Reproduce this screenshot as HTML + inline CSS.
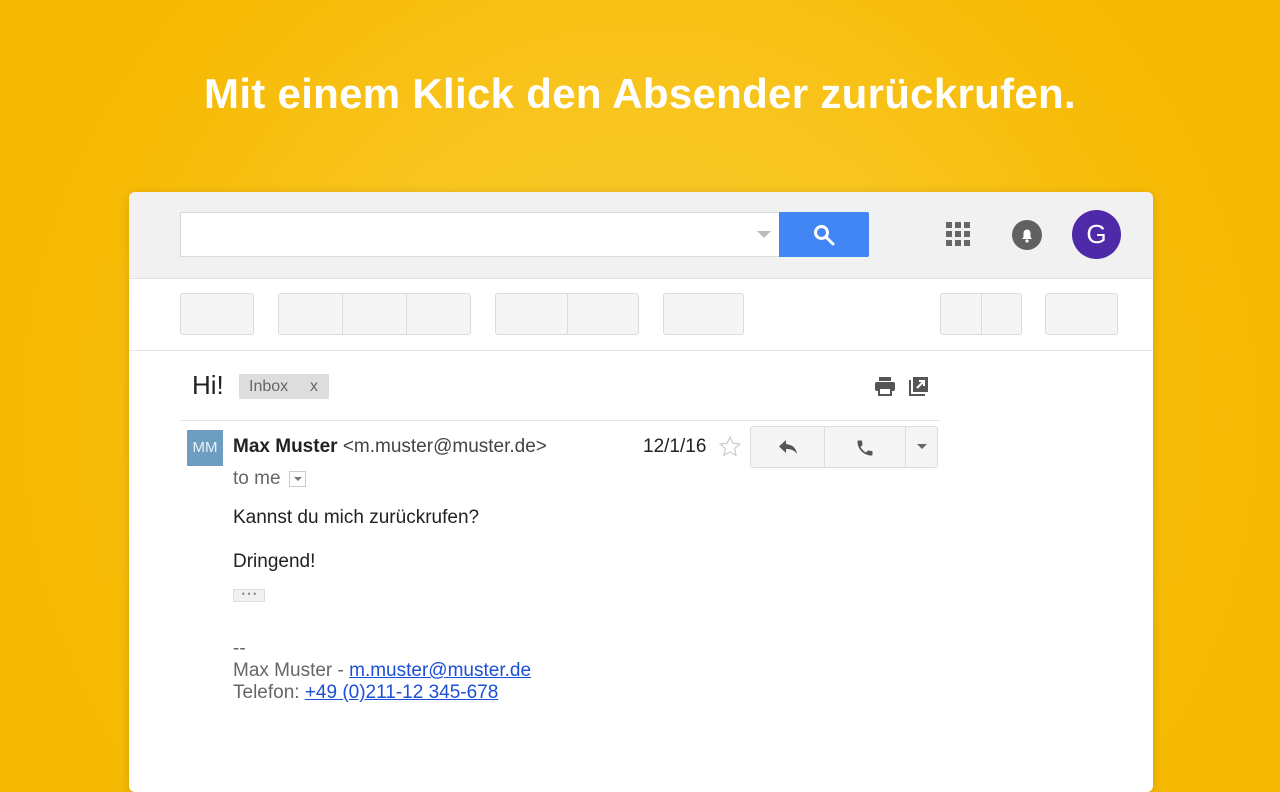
<!DOCTYPE html>
<html><head><meta charset="utf-8"><style>
*{margin:0;padding:0;box-sizing:border-box}
body{width:1280px;height:768px;overflow:hidden;background:radial-gradient(circle at 640px 420px,#f8ca2a 0,#f8c520 300px,#f7bb06 560px,#f6b800 800px);font-family:"Liberation Sans",Arial,sans-serif;position:relative}
h1{position:absolute;top:70px;left:0;width:1280px;text-align:center;color:#fff;font-size:42px;font-weight:bold;letter-spacing:0.3px}
.win{position:absolute;left:129px;top:192px;width:1024px;height:600px;background:#fff;border-radius:6px;box-shadow:0 2px 10px rgba(0,0,0,.15);overflow:hidden}
.top{position:absolute;left:0;top:0;width:1024px;height:87px;background:#f1f1f1;border-bottom:1px solid #e3e3e3}
.search{position:absolute;left:51px;top:20px;width:600px;height:45px;background:#fff;border:1px solid #d9d9d9;border-right:none}
.sbtn{position:absolute;left:650px;top:20px;width:90px;height:45px;background:#4285f4;border-radius:0 2px 2px 0}
.b{position:absolute;top:101px;height:42px;background:#f5f5f5;border:1px solid #dcdcdc;border-radius:3px}
.sep{position:absolute;top:0;width:1px;height:100%;background:#dcdcdc}
.hr{position:absolute;left:0;top:158px;width:1024px;height:1px;background:#e5e5e5}
.abs{position:absolute}
.t{font-size:19px;color:#222}
a{color:#1a4fd6;text-decoration:underline}
</style></head><body>
<h1>Mit einem Klick den Absender zurückrufen.</h1>
<div class="win">
 <div class="top">
  <div class="search"><svg class="abs" style="left:576px;top:18px" width="14" height="8"><path d="M0 0h14L7 7z" fill="#bbb"/></svg></div>
  <div class="sbtn"><svg class="abs" style="left:33px;top:11px" width="24" height="24" viewBox="0 0 24 24"><circle cx="9.5" cy="9.5" r="6" stroke="#fff" stroke-width="3" fill="none"/><path d="M14 14l7 7" stroke="#fff" stroke-width="3" stroke-linecap="round"/></svg></div>
  <svg class="abs" style="left:817px;top:30px" width="26" height="26"><g fill="#666"><rect x="0" y="0" width="6" height="6"/><rect x="9" y="0" width="6" height="6"/><rect x="18" y="0" width="6" height="6"/><rect x="0" y="9" width="6" height="6"/><rect x="9" y="9" width="6" height="6"/><rect x="18" y="9" width="6" height="6"/><rect x="0" y="18" width="6" height="6"/><rect x="9" y="18" width="6" height="6"/><rect x="18" y="18" width="6" height="6"/></g></svg>
  <svg class="abs" style="left:882px;top:27px" width="32" height="32" viewBox="0 0 32 32"><circle cx="16" cy="16" r="15" fill="#616161"/><path d="M11 20h10l-1.5-2v-4a3.5 3.5 0 0 0-7 0v4z" fill="#fff"/><circle cx="16" cy="22" r="1.6" fill="#fff"/></svg>
  <div class="abs" style="left:943px;top:18px;width:49px;height:49px;border-radius:50%;background:#4f2aa8;color:#fff;font-size:26px;text-align:center;line-height:49px">G</div>
 </div>
 <div class="b" style="left:51px;width:74px"></div>
 <div class="b" style="left:149px;width:193px"><div class="sep" style="left:63px"></div><div class="sep" style="left:127px"></div></div>
 <div class="b" style="left:366px;width:144px"><div class="sep" style="left:71px"></div></div>
 <div class="b" style="left:534px;width:81px"></div>
 <div class="b" style="left:811px;width:82px"><div class="sep" style="left:40px"></div></div>
 <div class="b" style="left:916px;width:73px"></div>
 <div class="hr"></div>
 <div class="abs" style="left:63px;top:178px;font-size:26px;color:#222">Hi!</div>
 <div class="abs" style="left:110px;top:182px;width:90px;height:25px;background:#ddd;color:#666;font-size:16px;line-height:25px;padding-left:10px">Inbox<span style="position:absolute;left:71px">x</span></div>
 <svg class="abs" style="left:745px;top:184px" width="22" height="20" viewBox="0 0 22 20"><rect x="5" y="1" width="12" height="4" fill="#555"/><rect x="1" y="6" width="20" height="9" rx="2" fill="#555"/><rect x="5" y="12" width="12" height="7" fill="#fff" stroke="#555" stroke-width="2"/></svg>
 <svg class="abs" style="left:780px;top:184px" width="20" height="20" viewBox="0 0 20 20"><rect x="4" y="1" width="15" height="15" fill="#555"/><path d="M1 4v15h15" stroke="#555" stroke-width="2" fill="none"/><path d="M8 12l7-7M10 5h5v5" stroke="#fff" stroke-width="2" fill="none"/></svg>
 <div class="abs" style="left:51px;top:228px;width:759px;height:1px;background:#e5e5e5"></div>
 <div class="abs" style="left:58px;top:238px;width:36px;height:36px;background:#6d9ebf;color:#e8f1f8;font-size:15px;text-align:center;line-height:36px">MM</div>
 <div class="abs t" style="left:104px;top:244px"><b>Max Muster</b> <span style="color:#444">&lt;m.muster@muster.de&gt;</span></div>
 <div class="abs t" style="left:104px;top:276px;color:#666">to me</div>
 <div class="abs" style="left:160px;top:279px;width:17px;height:16px;border:1px solid #ccc"><svg class="abs" style="left:4px;top:5px" width="8" height="5"><path d="M0 0h8L4 4z" fill="#777"/></svg></div>
 <div class="abs t" style="left:514px;top:244px">12/1/16</div>
 <svg class="abs" style="left:589px;top:243px" width="24" height="24" viewBox="0 0 24 24"><path d="M12 2l2.9 6.3 6.9.7-5.2 4.6 1.5 6.8L12 16.9 5.9 20.4l1.5-6.8L2.2 9l6.9-.7z" fill="none" stroke="#ccc" stroke-width="1.2"/></svg>
 <div class="abs" style="left:621px;top:234px;width:188px;height:42px;background:#f5f5f5;border:1px solid #dcdcdc;border-radius:3px">
  <div class="sep" style="left:73px"></div><div class="sep" style="left:154px"></div>
  <svg class="abs" style="left:27px;top:12px" width="20" height="16" viewBox="0 0 20 16"><path d="M8 1L1 7.5 8 14v-4c5 0 8 1 11 5-1-6-4-9-11-10z" fill="#555"/></svg>
  <svg class="abs" style="left:104px;top:11px" width="20" height="20" viewBox="0 0 24 24"><path d="M6.6 10.8c1.4 2.8 3.8 5.1 6.6 6.6l2.2-2.2c.3-.3.7-.4 1-.2 1.1.4 2.300.6 3.6.6.6 0 1 .4 1 1V20c0 .6-.4 1-1 1C10.6 21 3 13.4 3 4c0-.6.4-1 1-1h3.5c.6 0 1 .4 1 1 0 1.3.2 2.5.6 3.6.1.3 0 .7-.2 1z" fill="#555"/></svg>
  <svg class="abs" style="left:166px;top:17px" width="10" height="6"><path d="M0 0h10L5 5z" fill="#666"/></svg>
 </div>
 <div class="abs t" style="left:104px;top:315px">Kannst du mich zurückrufen?</div>
 <div class="abs t" style="left:104px;top:359px">Dringend!</div>
 <div class="abs" style="left:104px;top:397px;width:32px;height:13px;background:#f1f1f1;border:1px solid #ddd;color:#888;font-size:9px;text-align:center;line-height:9px">• • •</div>
 <div class="abs t" style="left:104px;top:446px;color:#666;line-height:22px">--<br>Max Muster - <a>m.muster@muster.de</a><br>Telefon: <a>+49 (0)211-12 345-678</a></div>
</div>
</body></html>
